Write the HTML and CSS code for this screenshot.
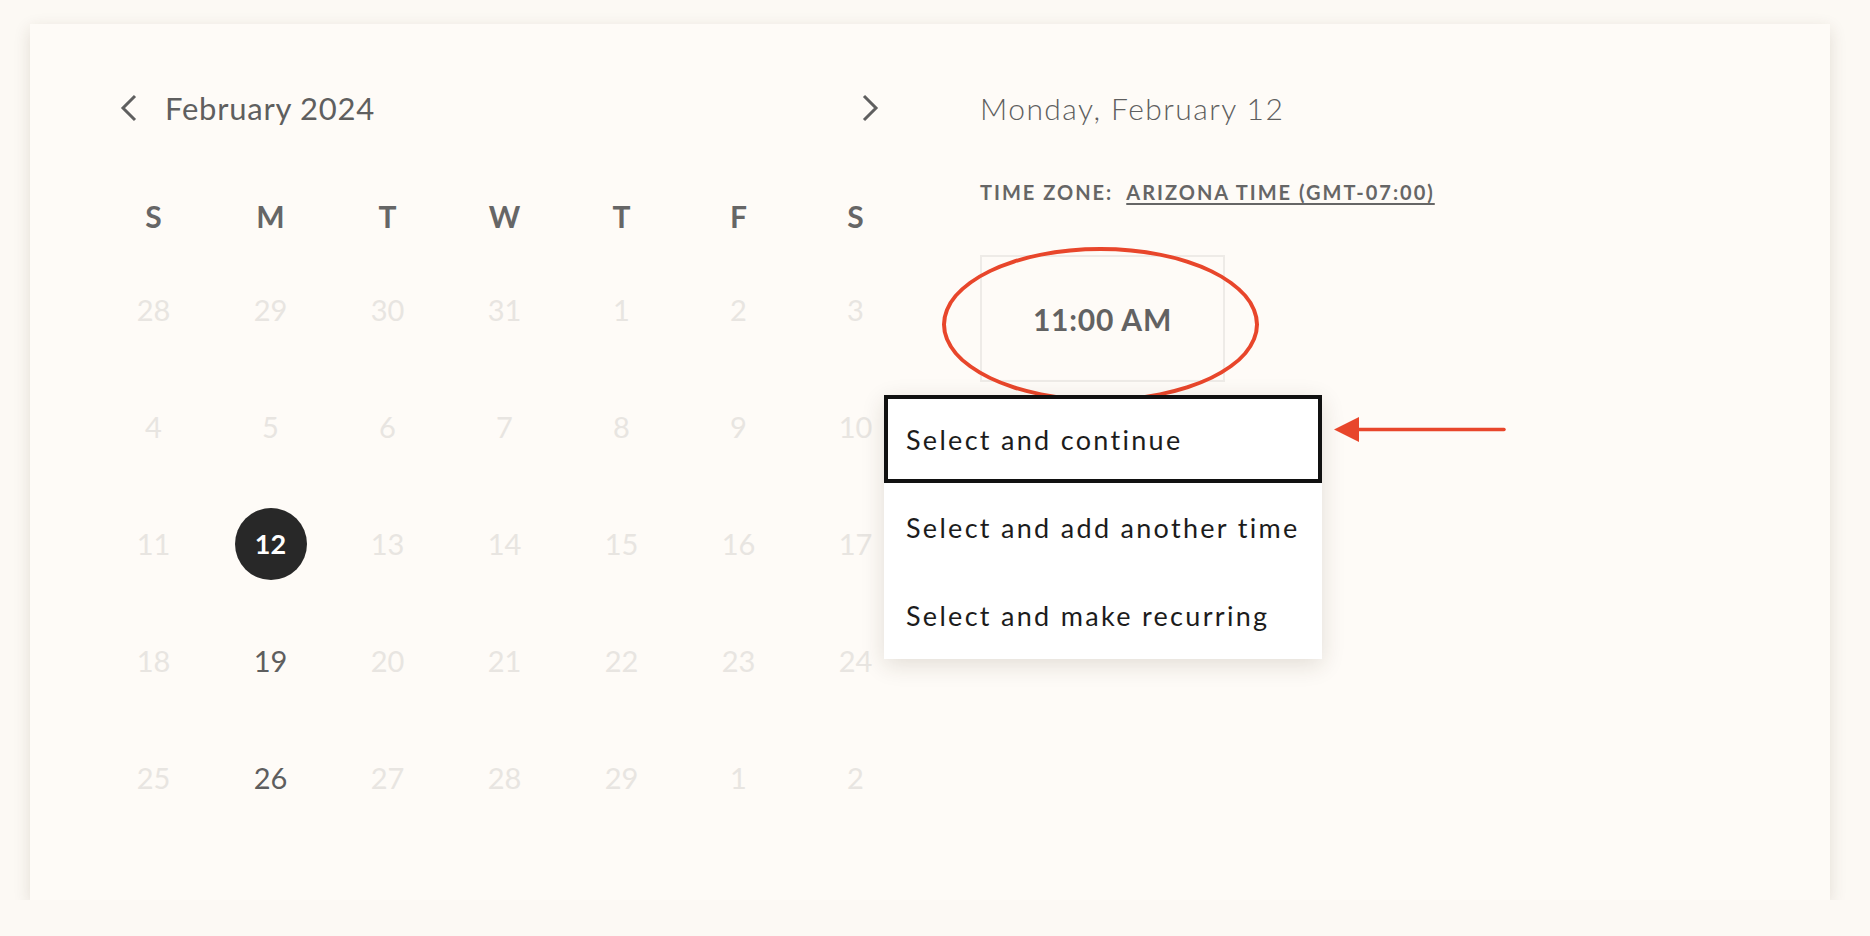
FILE: index.html
```html
<!DOCTYPE html>
<html lang="en">
<head>
<meta charset="utf-8">
<title>Booking calendar</title>
<link rel="stylesheet" href="styles.css">
</head>
<body>
<main class="card">
  <section class="calendar">
    <header class="cal-head">
      <button class="nav" aria-label="Previous month">
        <svg width="20" height="28" viewBox="0 0 20 28"><polyline points="16,2 4,14 16,26" fill="none" stroke="#5f5f5f" stroke-width="3"/></svg>
      </button>
      <h2 class="month">February 2024</h2>
      <button class="nav" aria-label="Next month">
        <svg width="20" height="28" viewBox="0 0 20 28"><polyline points="4,2 16,14 4,26" fill="none" stroke="#5f5f5f" stroke-width="3"/></svg>
      </button>
    </header>
    <div class="weekdays">
      <span>S</span><span>M</span><span>T</span><span>W</span><span>T</span><span>F</span><span>S</span>
    </div>
    <div class="days">
      <span class="day muted">28</span><span class="day muted">29</span><span class="day muted">30</span><span class="day muted">31</span><span class="day muted">1</span><span class="day muted">2</span><span class="day muted">3</span>
      <span class="day muted">4</span><span class="day muted">5</span><span class="day muted">6</span><span class="day muted">7</span><span class="day muted">8</span><span class="day muted">9</span><span class="day muted">10</span>
      <span class="day muted">11</span><span class="day"><b class="selected">12</b></span><span class="day muted">13</span><span class="day muted">14</span><span class="day muted">15</span><span class="day muted">16</span><span class="day muted">17</span>
      <span class="day muted">18</span><span class="day">19</span><span class="day muted">20</span><span class="day muted">21</span><span class="day muted">22</span><span class="day muted">23</span><span class="day muted">24</span>
      <span class="day muted">25</span><span class="day">26</span><span class="day muted">27</span><span class="day muted">28</span><span class="day muted">29</span><span class="day muted">1</span><span class="day muted">2</span>
    </div>
  </section>

  <section class="slots">
    <h3 class="date">Monday, February 12</h3>
    <p class="tz">TIME ZONE:&nbsp; <a href="#">ARIZONA TIME (GMT-07:00)</a></p>
    <div class="slot-wrap">
      <button class="slot">11:00 AM</button>
      <span class="ring"></span>
      <ul class="menu">
        <li class="item focused">Select and continue</li>
        <li class="item">Select and add another time</li>
        <li class="item">Select and make recurring</li>
      </ul>
      <svg class="arrow" width="172" height="26" viewBox="0 0 172 26">
        <line x1="22" y1="12.5" x2="170" y2="12.5" stroke="#e8462b" stroke-width="3.5" stroke-linecap="round"/>
        <polygon points="0,12.5 25,0 25,25" fill="#e8462b"/>
      </svg>
    </div>
  </section>
</main>
</body>
</html>
```

FILE: styles.css
```css
* { box-sizing: border-box; }

body {
  margin: 0;
  background: #fcf9f4;
  font-family: Lato, "Open Sans", sans-serif;
  color: #5f5f5f;
}

.card {
  margin: 24px 0 0 30px;
  width: 1800px;
  height: 876px;
  background: #fefbf7;
  box-shadow: 0 5px 16px rgba(70, 50, 30, 0.14);
  display: flex;
  padding: 56px 0 0 65px;
}

/* calendar */
.calendar {
  width: 819px;
  flex: none;
}

.cal-head {
  height: 56px;
  display: flex;
  align-items: center;
  padding: 0 34px 0 24px;
}

.nav {
  border: 0;
  background: none;
  padding: 0;
  width: 20px;
  height: 28px;
  display: flex;
  cursor: pointer;
}

.month {
  flex: 1;
  margin: 0 0 0 26px;
  font-size: 31px;
  font-weight: 400;
  letter-spacing: 0.75px;
  color: #5f5f5f;
  line-height: 56px;
}

.weekdays {
  margin-top: 45px;
  display: grid;
  grid-template-columns: repeat(7, 117px);
  height: 70px;
  line-height: 70px;
  text-align: center;
  font-size: 30px;
  font-weight: 700;
  color: #666;
}

.days {
  display: grid;
  grid-template-columns: repeat(7, 117px);
  grid-auto-rows: 117px;
}

.day {
  display: flex;
  align-items: center;
  justify-content: center;
  font-size: 29px;
  font-weight: 400;
  color: #5e5e5e;
}

.day.muted { color: #e8e5e1; }

.selected {
  width: 72px;
  height: 72px;
  border-radius: 50%;
  background: #282828;
  color: #fff;
  font-weight: 700;
  font-size: 27px;
  display: flex;
  align-items: center;
  justify-content: center;
}

/* right column */
.slots {
  margin-left: 66px;
  flex: 1;
}

.date {
  margin: 0;
  line-height: 56px;
  font-size: 30px;
  font-weight: 300;
  letter-spacing: 1.45px;
  color: #5f5f5f;
}

.tz {
  margin: 41px 0 0;
  line-height: 30px;
  font-size: 20px;
  font-weight: 700;
  letter-spacing: 2px;
  color: #666;
}

.tz a {
  color: #666;
  text-decoration: underline;
  text-underline-offset: 3px;
}

.slot-wrap {
  position: relative;
  margin-top: 48px;
}

.slot {
  width: 245px;
  height: 127px;
  border: 2px solid #eeebe7;
  background: transparent;
  font-family: Lato, "Open Sans", sans-serif;
  font-size: 30px;
  font-weight: 700;
  color: #626262;
  letter-spacing: 0.8px;
  display: flex;
  align-items: center;
  justify-content: center;
  padding: 0;
}

.ring {
  position: absolute;
  left: -38px;
  top: -8px;
  width: 317px;
  height: 155px;
  border: 4px solid #e8462b;
  border-radius: 50%;
  pointer-events: none;
}

.menu {
  position: absolute;
  left: -96px;
  top: 140px;
  width: 438px;
  margin: 0;
  padding: 0;
  list-style: none;
  background: #fff;
  box-shadow: 0 6px 22px rgba(60, 40, 20, 0.14);
}

.item {
  height: 88px;
  display: flex;
  align-items: center;
  padding-left: 22px;
  font-size: 27px;
  color: #1c1c1c;
  letter-spacing: 2.3px;
}

.item.focused {
  border: 4px solid #111;
  padding-left: 18px;
}

.arrow {
  position: absolute;
  left: 354px;
  top: 162px;
}
```
